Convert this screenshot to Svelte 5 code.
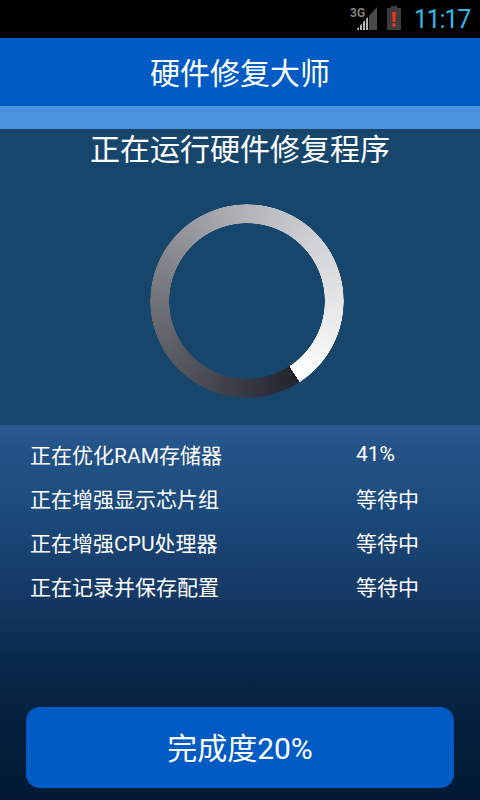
<script>
	const tasks = [
		{ name: '正在优化RAM存储器', state: '41%' },
		{ name: '正在增强显示芯片组', state: '等待中' },
		{ name: '正在增强CPU处理器', state: '等待中' },
		{ name: '正在记录并保存配置', state: '等待中' }
	]
	let progress = $state(20)
</script>

<div class="screen">
	<div class="status">
		<svg class="signal" width="30" height="24" viewBox="0 0 30 24">
			<text x="2" y="10" class="net">3G</text>
			<path d="M21 23h8V0l-8 8.8z" fill="#4a4a4a" />
			<path d="M9 23h2v-3.3l-2 2.2zM12 23h2v-6.6l-2 2.2zM15 23h2v-9.9l-2 2.2zM18 23h2V9.9l-2 2.2z" fill="#b4b4b4" />
		</svg>
		<svg class="battery" width="14" height="24" viewBox="0 0 14 24">
			<path d="M4 0h6v2h4v22H0V2h4z" fill="#3c3c3c" />
			<path d="M5.2 6h3.6l-.5 10H5.7z" fill="#f0341f" />
			<rect x="5.4" y="17.5" width="3.2" height="3.2" fill="#f0341f" />
		</svg>
		<span class="time">11:17</span>
	</div>

	<header>硬件修复大师</header>
	<div class="band"></div>

	<section class="top">
		<h1>正在运行硬件修复程序</h1>
		<div class="ring"></div>
	</section>

	<section class="panel">
		<ul>
			{#each tasks as t}
				<li>
					<span class="name">{t.name}</span>
					<span class="state">{t.state}</span>
				</li>
			{/each}
		</ul>
		<button>完成度{progress}%</button>
	</section>
</div>

<style>
	:global(body) { margin: 0; background: #000; }

	.screen {
		width: 480px; height: 800px; overflow: hidden;
		display: flex; flex-direction: column;
		font-family: "Roboto", "Noto Sans CJK SC", sans-serif;
		color: #fff;
	}

	.status {
		height: 38px; background: #000; flex: none;
		display: flex; align-items: flex-start; justify-content: flex-end;
		padding: 6px 10px 0 0; box-sizing: border-box;
	}
	.signal { margin-right: 9px; margin-top: 1px; }
	.net { font: 700 12px "Roboto", sans-serif; fill: #808080; }
	.battery { margin-right: 13px; }
	.time { font: 400 25px/28px "Roboto", sans-serif; color: #33b5e5; letter-spacing: -1.2px; }

	header {
		height: 68px; flex: none; background: #005bc4;
		display: flex; align-items: center; justify-content: center;
		font-size: 30px; padding-bottom: 3px; box-sizing: border-box;
	}
	.band { height: 23px; flex: none; background: #4b92dc; }

	.top {
		height: 296px; flex: none; background: #17466d;
		display: flex; flex-direction: column; align-items: center;
	}
	h1 { margin: 0; font-size: 30px; font-weight: 400; line-height: 42px; }

	.ring {
		width: 194px; height: 194px; margin: 33px 0 0 14px; border-radius: 50%;
		background: conic-gradient(from 147deg, #1c1e28 0deg, #23252f 2deg, #6f7078 120deg, #a9abb0 200deg, #d0d1d4 260deg, #fff 360deg);
		-webkit-mask: radial-gradient(circle, transparent 77.5px, #000 78px, #000 96.5px, transparent 97px);
		mask: radial-gradient(circle, transparent 77.5px, #000 78px, #000 96.5px, transparent 97px);
	}

	.panel {
		flex: 1;
		background: linear-gradient(#2a5a94 0, #245488 20px, #1c4a7c 85px, #163a66 165px, #0a2a4c 235px, #04203e 290px, #021a33 375px);
		display: flex; flex-direction: column; justify-content: space-between;
		padding: 7px 26px 12px; box-sizing: border-box;
	}
	ul { list-style: none; margin: 0; padding: 0 0 0 4px; }
	li { height: 44px; display: flex; align-items: center; font-size: 21px; }
	.name { width: 326px; }

	button {
		height: 81px; border: none; border-radius: 14px; background: #005bc4;
		color: #fff; font: inherit; font-size: 30px; padding: 0 0 4px;
	}
</style>
